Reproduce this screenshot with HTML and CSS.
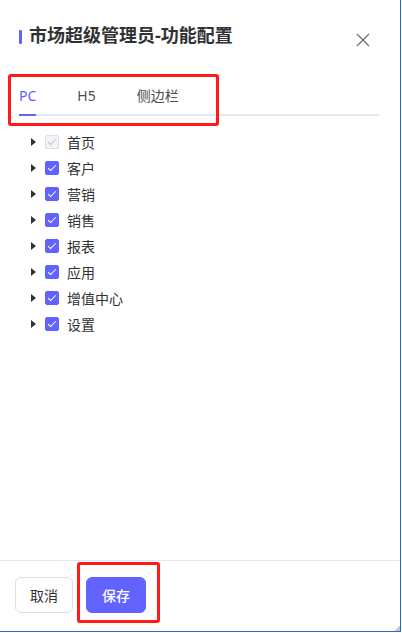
FILE: index.html
```html
<!DOCTYPE html>
<html lang="zh-CN">
<head>
    <meta charset="UTF-8" />
    <meta name="viewport" content="width=device-width, initial-scale=1.0"/>
    <title>功能配置</title>
    <link rel="stylesheet" href="styles.css">
</head>
<body>
    <div class="drawer">
        <div class="drawer-header">
            <h1 class="title">市场超级管理员-功能配置</h1>
            <button class="close" aria-label="关闭">
                <svg width="14" height="14" viewBox="0 0 14 14"><path d="M1 1L13 13M13 1L1 13" stroke="#6b6f78" stroke-width="1.3" fill="none"/></svg>
            </button>
        </div>

        <div class="tabs">
            <div class="tab active">PC</div>
            <div class="tab">H5</div>
            <div class="tab">侧边栏</div>
        </div>

        <ul class="tree">
            <li class="node"><span class="caret"></span><span class="check disabled"></span><span class="label">首页</span></li>
            <li class="node"><span class="caret"></span><span class="check"></span><span class="label">客户</span></li>
            <li class="node"><span class="caret"></span><span class="check"></span><span class="label">营销</span></li>
            <li class="node"><span class="caret"></span><span class="check"></span><span class="label">销售</span></li>
            <li class="node"><span class="caret"></span><span class="check"></span><span class="label">报表</span></li>
            <li class="node"><span class="caret"></span><span class="check"></span><span class="label">应用</span></li>
            <li class="node"><span class="caret"></span><span class="check"></span><span class="label">增值中心</span></li>
            <li class="node"><span class="caret"></span><span class="check"></span><span class="label">设置</span></li>
        </ul>

        <div class="footer">
            <button class="btn">取消</button>
            <button class="btn primary">保存</button>
        </div>

        <!-- annotation marks -->
        <div class="mark mark-tabs"></div>
        <div class="mark mark-save"></div>
        <div class="resize-grip"></div>
    </div>
</body>
</html>
```

FILE: styles.css
```css
body {
    margin: 0;
    background: #fff;
    font-family: "Noto Sans", "Noto Sans CJK SC", sans-serif;
    color: #303133;
}

.drawer {
    position: relative;
    width: 400px;
    height: 631px;
    border-right: 1px solid #1a73c8;
    border-bottom: 1px solid #1a73c8;
    display: flex;
    flex-direction: column;
    box-sizing: content-box;
}

.drawer-header {
    display: flex;
    align-items: center;
    justify-content: space-between;
    padding: 22px 30px 0 19px;
}

.title {
    margin: 0;
    display: flex;
    align-items: center;
    gap: 7px;
    font-size: 18px;
    font-weight: 700;
    line-height: 26px;
    color: #303133;
}

.title::before {
    content: "";
    width: 3px;
    height: 14px;
    margin-top: 3px;
    background: #6262ff;
    border-radius: 1px;
}

.close {
    background: none;
    border: none;
    padding: 0;
    margin-top: 9px;
    cursor: pointer;
    display: flex;
}

.tabs {
    display: flex;
    gap: 41px;
    margin: 38px 21px 0 19px;
    border-bottom: 2px solid #e4e7ed;
}

.tab {
    font-size: 14px;
    line-height: 20px;
    padding-bottom: 8px;
    margin-bottom: -2px;
    color: #4a4d55;
    border-bottom: 2px solid transparent;
}

.tab.active {
    color: #6262ff;
    border-bottom-color: #6262ff;
}

.tree {
    list-style: none;
    margin: 13px 0 0;
    padding: 0 0 0 31px;
    flex: 1;
}

.node {
    display: flex;
    align-items: center;
    height: 26px;
    font-size: 14px;
    color: #303133;
}

.caret {
    width: 0;
    height: 0;
    border-top: 4px solid transparent;
    border-bottom: 4px solid transparent;
    border-left: 5px solid #303133;
    margin-right: 9px;
}

.check {
    position: relative;
    width: 14px;
    height: 14px;
    box-sizing: border-box;
    border-radius: 2px;
    background: #6262ff;
    border: 1px solid #6262ff;
    margin-right: 8px;
}

.check::after {
    content: "";
    position: absolute;
    left: 4px;
    top: 1px;
    width: 3px;
    height: 7px;
    border: solid #fff;
    border-width: 0 1.5px 1.5px 0;
    transform: rotate(45deg);
}

.check.disabled {
    background: #f2f3f7;
    border-color: #dcdfe6;
}

.check.disabled::after {
    border-color: #c0c4cc;
}

.footer {
    display: flex;
    gap: 13px;
    padding: 16px 15px 18px;
    border-top: 1px solid #e4e7ed;
}

.btn {
    height: 36px;
    padding: 0 14px;
    font-family: inherit;
    font-size: 14px;
    color: #303133;
    background: #fff;
    border: 1px solid #dcdfe6;
    border-radius: 6px;
    cursor: pointer;
}

.btn.primary {
    width: 60px;
    padding: 0;
    color: #fff;
    font-weight: 500;
    background: #6262ff;
    border-color: #6262ff;
}

.mark {
    position: absolute;
    border: 3px solid #ff1a1a;
    border-radius: 3px;
    box-sizing: border-box;
}

.mark-tabs {
    left: 8px;
    top: 74px;
    width: 211px;
    height: 52px;
}

.mark-save {
    left: 77px;
    top: 562px;
    width: 83px;
    height: 61px;
}

.resize-grip {
    position: absolute;
    right: 0;
    bottom: 0;
    width: 5px;
    height: 5px;
    background: linear-gradient(135deg, transparent 50%, #c8c8c8 50%);
}
```
